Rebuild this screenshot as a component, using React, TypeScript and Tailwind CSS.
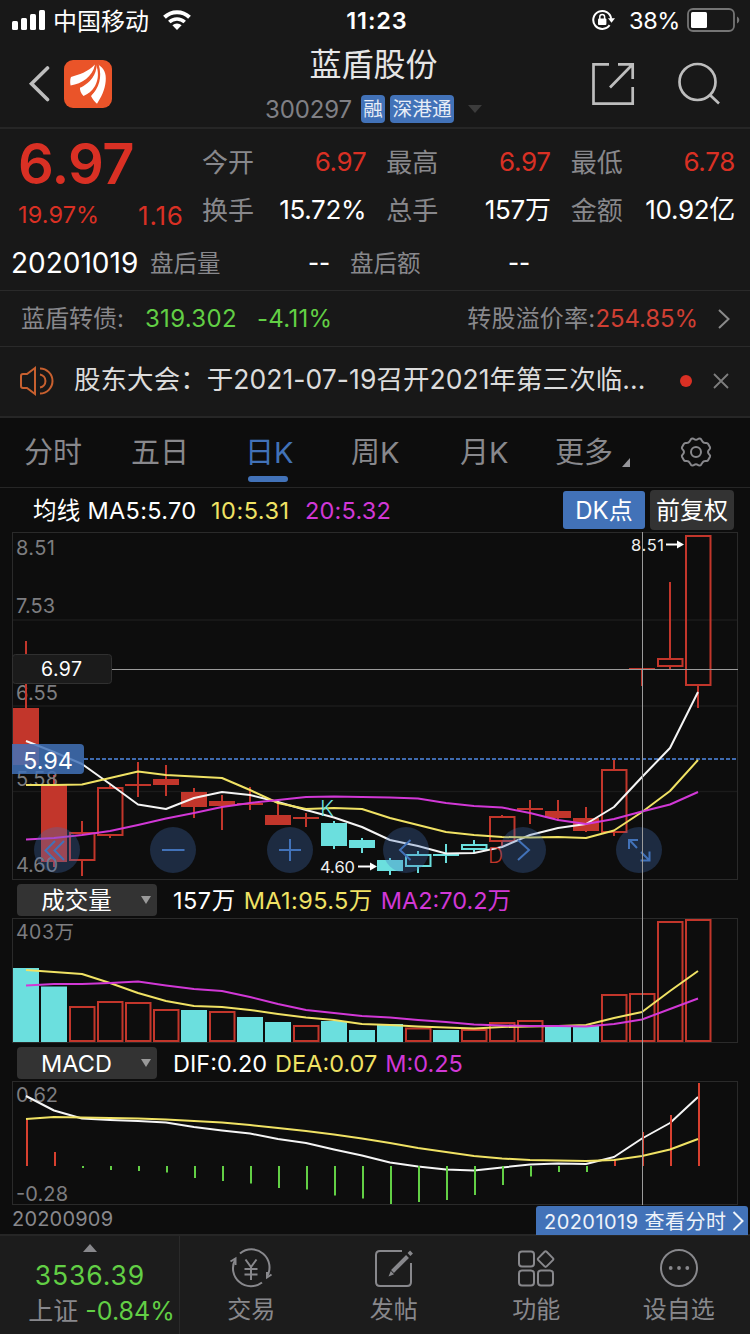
import type { ReactNode } from "react";

const FONT = "font-['Inter','Noto_Sans_CJK_SC',sans-serif]";

const RED = "#c2362b";
const CYAN = "#6bdfde";
const YELLOW = "#f0e264";
const MAGENTA = "#d138d6";
const GREEN = "#62cf45";

type Candle = {
  kind: "solid" | "hollow" | "cross";
  color: string;
  top: number;
  bottom: number;
  high: number;
  low: number;
};

const c = (
  kind: Candle["kind"],
  color: string,
  top: number,
  bottom: number,
  high: number,
  low: number
): Candle => ({ kind, color, top, bottom, high, low });

const candles: Candle[] = [
  c("solid", RED, 708, 765, 641, 765),
  c("solid", RED, 785, 862, 775, 867),
  c("hollow", RED, 832, 861, 821, 876),
  c("hollow", RED, 787, 836, 785, 838),
  c("cross", RED, 785, 785, 762, 797),
  c("solid", RED, 779, 785, 765, 796),
  c("solid", RED, 792, 807, 788, 818),
  c("solid", RED, 801, 806, 795, 830),
  c("cross", RED, 804, 804, 787, 810),
  c("solid", RED, 815, 825, 802, 825),
  c("cross", RED, 818, 818, 813, 827),
  c("solid", CYAN, 823, 846, 821, 849),
  c("solid", CYAN, 840, 848, 838, 853),
  c("solid", CYAN, 860, 871, 858, 875),
  c("hollow", CYAN, 854, 867, 851, 873),
  c("cross", CYAN, 855, 855, 844, 863),
  c("hollow", CYAN, 844, 850, 840, 853),
  c("hollow", RED, 816, 842, 815, 846),
  c("cross", RED, 809, 809, 800, 824),
  c("solid", RED, 811, 818, 800, 821),
  c("solid", RED, 818, 831, 807, 832),
  c("hollow", RED, 769, 833, 759, 836),
  c("cross", RED, 669, 669, 669, 686),
  c("hollow", RED, 658, 667, 582, 669),
  c("hollow", RED, 535, 686, 535, 708),
];

const ma5 = [741, 752, 764, 784, 804.5, 809, 798, 792, 795, 802, 810, 817.5, 827, 840, 846, 853.5, 853, 847, 835, 828, 824, 807, 777, 748, 692];
const ma10 = [785, 785, 784.5, 778, 771.5, 775, 776.5, 778, 790, 803, 809, 808, 809, 818, 825, 832, 835, 837, 837.5, 837, 838, 830.5, 812, 791, 760];
const ma20 = [839.5, 838, 835, 831, 825, 818.5, 813, 807, 803, 800, 797, 796.5, 797, 797.5, 798.5, 803, 806, 807.5, 813, 820, 824, 819, 811.5, 804.5, 792];

const volumes = [968, 986.5, 1006, 1001, 1002, 1009, 1010, 1011, 1017, 1022, 1025, 1021, 1030, 1024, 1027.5, 1030, 1029, 1022, 1020, 1026.5, 1026, 994, 993, 921, 919];
const volumeDown = [0, 1, 6, 8, 9, 11, 12, 13, 15, 19, 20];
const volMa1 = [970, 972, 974, 983, 993, 1001, 1006, 1007, 1010, 1014, 1017.5, 1020, 1024, 1025, 1026.5, 1027.5, 1028.5, 1027, 1026.5, 1026, 1025, 1018, 1012, 991, 971];
const volMa2 = [985.5, 984, 984, 983, 981.5, 985.5, 989, 991, 997, 1004, 1010, 1013, 1016, 1017.5, 1020, 1022, 1024.5, 1025.5, 1026, 1026, 1026.5, 1024, 1019.5, 1009, 998.5];

const MACD_ZERO = 1166;
const macdBars = [1119, 1152, 1168, 1170, 1171, 1172.5, 1178, 1181, 1183.5, 1188, 1189.5, 1195.5, 1198.5, 1204, 1202, 1200, 1195, 1185, 1176.5, 1172, 1172, 1160, 1132, 1115, 1083];
const dif = [1096, 1110.5, 1118.5, 1120, 1121, 1122.5, 1127, 1130.5, 1133.5, 1139, 1143, 1149.5, 1155.5, 1162.5, 1166.5, 1169.5, 1170.5, 1167.5, 1164.5, 1163.5, 1164, 1157, 1138.5, 1123, 1097];
const dea = [1119, 1117, 1117.5, 1118, 1118.5, 1119.5, 1121, 1122.5, 1125, 1128, 1131, 1134.5, 1138.5, 1143, 1148, 1152, 1156, 1158.5, 1160, 1160.5, 1161, 1160, 1156, 1149.5, 1139];

const centerX = (i: number) => 26 + i * 28;

function Line({ data, color }: { data: number[]; color: string }) {
  return (
    <polyline
      points={data.map((y, i) => `${centerX(i)},${y}`).join(" ")}
      fill="none"
      stroke={color}
      strokeWidth="2"
      strokeLinejoin="round"
    />
  );
}

function StatusBar() {
  return (
    <div className="grid h-10 grid-cols-[1fr_auto_1fr] items-center pl-3 pr-[8px] text-white">
      <div className="flex items-center">
        <svg width="34" height="20" viewBox="0 0 34 20" fill="currentColor">
          <rect x="0" y="11" width="6" height="9" rx="1.5" />
          <rect x="9" y="8" width="6" height="12" rx="1.5" />
          <rect x="18" y="4" width="6" height="16" rx="1.5" />
          <rect x="27" y="0" width="6" height="20" rx="1.5" />
        </svg>
        <span className="ml-[7px] pt-[3px] text-[24px] leading-none">中国移动</span>
        <svg className="ml-[14px]" width="28" height="20" viewBox="0 0 28 20">
          <path d="M1.500 7.200a18 18 0 0 1 25 0" fill="none" stroke="currentColor" strokeWidth="4" />
          <path d="M6.300 12a11.200 11.200 0 0 1 15.400 0" fill="none" stroke="currentColor" strokeWidth="3.600" />
          <path d="M14 20l-4.600-4.700a6.600 6.600 0 0 1 9.200 0z" fill="currentColor" />
        </svg>
      </div>
      <span className="pt-[2px] text-[23.500px] font-semibold leading-none tracking-[0.900px]">11:23</span>
      <div className="flex items-center justify-end pr-[2px]">
        <svg width="23" height="22" viewBox="0 0 23 22">
          <path d="M17.600 16.200a9 9 0 1 1 1.600-6.400" fill="none" stroke="currentColor" strokeWidth="2" />
          <path d="M16 9.200h7l-3.500 4.600z" fill="currentColor" />
          <rect x="6" y="9.600" width="8.400" height="6.400" rx="1" fill="currentColor" />
          <path d="M7.800 10V7.800a2.400 2.400 0 0 1 4.800 0V10" fill="none" stroke="currentColor" strokeWidth="1.500" />
        </svg>
        <span className="ml-[14px] pt-[2px] text-[23.500px] leading-none tracking-[-0.400px]">38%</span>
        <svg className="ml-[7px]" width="53" height="24" viewBox="0 0 53 24">
          <rect x="1" y="1" width="46" height="22" rx="5" fill="none" stroke="#757575" strokeWidth="1.800" />
          <rect x="4" y="4" width="16" height="16" rx="1.500" fill="currentColor" />
          <path d="M50 8.500c3 1.400 3 5.600 0 7z" fill="#757575" />
        </svg>
      </div>
    </div>
  );
}

function Header() {
  return (
    <div className="grid h-[89px] grid-cols-[263px_220px_1fr] border-b-2 border-[#262626]">
      <div className="flex items-center pl-[28px]">
        <svg width="22" height="36" viewBox="0 0 22 36">
          <path d="M19.500 2L3.500 17.700l16 15.800" fill="none" stroke="#bdbdbd" strokeWidth="3.600" strokeLinecap="round" />
        </svg>
        <svg className="ml-[14px]" width="48" height="48" viewBox="0 0 48 48">
          <rect width="48" height="48" rx="9" fill="#ea5429" />
          <path d="M7 17C6 19 6 23 6.600 25.500 18 23.500 28.500 17 31 4.500 24 12 15 14.500 7 17z" fill="#fff" />
          <path d="M16 27C24 23 31 15 32 4.500 34.500 11 35 19 31 26 28 31 24 34 19.500 36 17 33.500 15.500 30 16 27z" fill="#fff" />
          <path d="M34 4.600C40 8 42.500 14 41.700 21 41 30 37 37.500 33 43.700 31 42 28 38.500 27 36 34.500 27 37.500 17 34 4.600z" fill="#fff" />
          <path d="M32 4.500C31.500 15 25 22.500 16 27M34 4.600C37.300 17 34.500 27.500 26 35.500" fill="none" stroke="#ea5429" strokeWidth="1.600" />
        </svg>
      </div>
      <div className="flex flex-col items-center pl-[1px] pt-[8px]">
        <span className="text-[32px] leading-[34px] text-[#e6e6e6]">蓝盾股份</span>
        <div className="mt-[13px] flex h-7 items-center">
          <span className="pt-[1px] text-[24px] leading-none tracking-[-0.100px] text-[#808085]">300297</span>
          <span className="ml-[9px] flex h-7 w-6 items-center justify-center rounded bg-[#4272b8] pt-[2px] text-[19.500px] leading-none text-[#e8eef7]">融</span>
          <span className="ml-[5px] flex h-7 w-16 items-center justify-center rounded bg-[#4272b8] pt-[2px] text-[19.700px] leading-none text-[#e8eef7]">深港通</span>
          <svg className="ml-[14px]" width="14" height="8" viewBox="0 0 14 8">
            <path d="M0 0h14L7 8z" fill="#3c3c3c" />
          </svg>
        </div>
      </div>
      <div className="flex items-start pl-[108px] pt-[22px]">
        <svg width="44" height="44" viewBox="0 0 44 44" fill="none" stroke="#bdbdbd" strokeWidth="2.700">
          <path d="M18 2.300H2.500v39.400h39.200V25M27 2.300h14.700V17M41.200 2.800L19 25.500" />
        </svg>
        <svg className="ml-[42px]" width="44" height="44" viewBox="0 0 44 44" fill="none" stroke="#bdbdbd" strokeWidth="2.700">
          <circle cx="20.500" cy="20" r="18" />
          <path d="M32.500 32.500L42 41.500" />
        </svg>
      </div>
    </div>
  );
}

const metrics = [
  { label: "今开", value: "6.97", up: true },
  { label: "最高", value: "6.97", up: true },
  { label: "最低", value: "6.78", up: true },
  { label: "换手", value: "15.72%" },
  { label: "总手", value: "157万" },
  { label: "金额", value: "10.92亿" },
];

function Quote() {
  return (
    <div className="h-[162px] border-b border-[#2a2a2a]">
      <div className="flex h-[108px]">
        <div className="w-[202px] pl-[18px] pt-[7px] text-[#d93024]">
          <div className="text-[56px] font-[560] leading-[56px] tracking-[-0.600px]">6.97</div>
          <div className="mt-[8px] flex items-center leading-[28px]">
            <span className="w-[120px] text-[23.500px] tracking-[0.100px]">19.97%</span>
            <span className="pt-[2px] text-[26px] tracking-[0.800px]">1.16</span>
          </div>
        </div>
        <div className="grid w-[533px] grid-cols-3 grid-rows-[48px_48px] gap-x-5 pt-[9px]">
          {metrics.map((m) => (
            <div key={m.label} className="flex items-center justify-between text-[26px] leading-none">
              <span className="pt-[1px] text-[#88888c]">{m.label}</span>
              <span className={m.up ? "tracking-[-0.300px] text-[#d93024]" : "tracking-[-0.300px] text-white"}>{m.value}</span>
            </div>
          ))}
        </div>
      </div>
      <div className="flex h-[52px] items-center leading-none">
        <span className="w-[150px] pl-[11px] text-[28px] text-white">20201019</span>
        <span className="w-[158px] pt-[1px] text-[23.500px] text-[#88888c]">盘后量</span>
        <span className="w-[42px] text-[24px] font-medium text-white">--</span>
        <span className="w-[158px] pt-[1px] text-[23.500px] text-[#88888c]">盘后额</span>
        <span className="text-[24px] font-medium text-white">--</span>
      </div>
    </div>
  );
}

function BondRow() {
  return (
    <div className="flex h-[56px] items-center border-b border-[#2a2a2a] pl-[21px] pr-[20px] pt-[1px] text-[24px] leading-none">
      <span className="w-[124px] text-[#88888c]">蓝盾转债:</span>
      <span className="w-[112px] tracking-[0.300px] text-[#62cf45]">319.302</span>
      <span className="tracking-[0.300px] text-[#62cf45]">-4.11%</span>
      <span className="ml-auto tracking-[0.200px] text-[#88888c]">转股溢价率:</span>
      <span className="tracking-[-0.100px] text-[#cf3f33]">254.85%</span>
      <svg className="ml-[20px]" width="12" height="20" viewBox="0 0 12 20">
        <path d="M1 1l9.500 9L1 19" fill="none" stroke="#8a8a8a" strokeWidth="2" />
      </svg>
    </div>
  );
}

function Notice() {
  return (
    <div className="flex h-[71px] items-center border-b-2 border-[#262626] pb-[2px] pl-[19px] pr-[21px]">
      <svg width="36" height="30" viewBox="0 0 36 30" fill="none" stroke="#c8602f" strokeWidth="2">
        <path d="M16 2L8 8H4Q2 8 2 10v10q0 2 2 2h4l8 6z" />
        <path d="M21 8.500a6.600 6.600 0 0 1 0 13M21 2.500a12.500 12.500 0 0 1 0 25" />
      </svg>
      <span className="ml-[19px] w-[590px] whitespace-nowrap pb-[2px] text-[26.500px] leading-none tracking-[0.050px] text-[#dcdcdc]">
        股东大会：于2021-07-19召开2021年第三次临...
      </span>
      <span className="ml-[16px] h-3 w-3 rounded-full bg-[#d93024]" />
      <svg className="ml-auto" width="16" height="16" viewBox="0 0 16 16">
        <path d="M1 1l14 14M15 1L1 15" stroke="#7d7d7d" strokeWidth="1.800" />
      </svg>
    </div>
  );
}

function Tab({ children, active }: { children: ReactNode; active?: boolean }) {
  return (
    <div className={active ? "relative text-[#4272b8]" : "text-[#88888c]"}>
      {children}
      {active && <span className="absolute left-[3px] top-[39px] h-[6px] w-10 rounded-full bg-[#4272b8]" />}
    </div>
  );
}

function Tabs() {
  return (
    <div className="grid h-[70px] grid-cols-[107px_114px_106px_109px_95px_124px_1fr] items-center border-b border-[#262626] pl-[24px] pt-[1px] text-[29px] leading-[32px]">
      <Tab>分时</Tab>
      <Tab>五日</Tab>
      <Tab active>日K</Tab>
      <Tab>周K</Tab>
      <Tab>月K</Tab>
      <Tab>
        <span className="flex items-end">
          更多
          <svg className="mb-[2px] ml-[9px]" width="8" height="9" viewBox="0 0 8 9">
            <path d="M8 0v9H0z" fill="#96969a" />
          </svg>
        </span>
      </Tab>
      <svg className="-mt-[2px]" width="34" height="32" viewBox="0 0 34 32" fill="none" stroke="#88888c" strokeWidth="2">
        <path d="M12 3.200Q12.500 2.500 13.500 2.500 14.500 2.500 15 3q2 1.500 4 0 .5-.5 1.500-.5 1 0 1.500.700L23.500 5.500Q24.500 7.500 27.500 7q1.200 0 1.700 1l1.800 3.200q.5 1-.5 2-1.500 1.300-1.500 2.800 0 1.500 1.500 2.800 1 1 .5 2L29.200 24q-.5 1-1.700 1-3-.5-4 1.500L22 28.800q-.5.700-1.500.700-1 0-1.500-.500-2-1.500-4 0-.5.500-1.500.500-1 0-1.500-.700L10.500 26.500Q9.500 24.500 6.500 25 5.300 25 4.800 24L3 20.800q-.5-1 .5-2Q5 17.500 5 16q0-1.500-1.500-2.800-1-1-.5-2L4.800 8q.5-1 1.700-1 3 .5 4-1.500z" />
        <circle cx="17" cy="16" r="5" />
      </svg>
    </div>
  );
}

function MaRow() {
  return (
    <div className="flex h-[44px] items-center pl-[33px] pr-4 text-[23.500px] leading-none">
      <span className="w-[178px] pt-[2px] tracking-[0.300px] text-white">均线 MA5:5.70</span>
      <span className="w-[94px] pt-[2px] tracking-[0.500px] text-[#f0e264]">10:5.31</span>
      <span className="pt-[2px] tracking-[0.200px] text-[#d138d6]">20:5.32</span>
      <span className="ml-auto flex h-[38px] w-[82px] items-center justify-center rounded-[3px] bg-[#4272b8] pt-[2px] text-[24px] text-white">DK点</span>
      <span className="ml-[5px] flex h-10 w-[84px] items-center justify-center rounded bg-[#333] pt-[1px] text-[24px] text-white">前复权</span>
    </div>
  );
}

const controls = [
  { x: 57, d: "M55 841L45.500 850.500l9.500 9.500M64 841L54.500 850.500L64 860" },
  { x: 173, d: "M162 850h22.500" },
  { x: 290, d: "M279 850h22M290 839v22" },
  { x: 406, d: "M410.500 840L400 850l10.500 10" },
  { x: 523, d: "M518 840l11 10l-11 10" },
  { x: 639, d: "M637 848L629.500 840M629 849v-9h9M641 852l8 8M640.500 860.500h9v-9" },
];

function PriceChart() {
  return (
    <svg className="block" width="726" height="348" viewBox="12 532 726 348">
      <rect x="12.500" y="532.500" width="725" height="347" fill="none" stroke="#2a2a2a" />
      <path d="M13 620H737M13 706H737M13 791.500H737" stroke="#1b1b1b" strokeWidth="1.500" />
      <g fill="#7d7d80" fontSize="20">
        <text x="16" y="555" textLength="39">8.51</text>
        <text x="16" y="612.500" textLength="39">7.53</text>
        <text x="16" y="699.500" textLength="42">6.55</text>
      </g>
      {candles.map((k, i) => {
        const x = centerX(i);
        if (k.kind === "cross") {
          return <path key={i} d={`M${x - 13} ${k.top}h26M${x} ${k.high}V${k.low}`} stroke={k.color} strokeWidth="2" />;
        }
        return (
          <g key={i} stroke={k.color} strokeWidth="2">
            <path d={`M${x} ${k.high}V${k.top}M${x} ${k.bottom}V${k.low}`} />
            {k.kind === "solid" ? (
              <rect x={x - 13} y={k.top} width="26" height={k.bottom - k.top} fill={k.color} stroke="none" />
            ) : (
              <rect x={x - 12} y={k.top + 1} width="24.500" height={k.bottom - k.top - 2} fill="none" />
            )}
          </g>
        );
      })}
      <g fill="#7d7d80" fontSize="20">
        <text x="16" y="785.500" textLength="42">5.58</text>
        <text x="16" y="872" textLength="42">4.60</text>
      </g>
      <path d="M84 759H737" stroke="#3f6bb0" strokeWidth="2" strokeDasharray="4 2" />
      <Line data={ma5} color="#f5f5f5" />
      <Line data={ma10} color={YELLOW} />
      <Line data={ma20} color={MAGENTA} />
      <text x="320" y="815.500" fill={CYAN} fontSize="21.500" fontWeight="300">K</text>
      <text x="488" y="863" fill={RED} fontSize="21" fontWeight="300">D</text>
      <g fill="#f0f0f0" fontSize="16.500">
        <text x="631" y="550.500" textLength="33">8.51</text>
        <text x="320" y="873" textLength="35">4.60</text>
      </g>
      <path d="M666 544.500h13M358 866.500h14" stroke="#fff" strokeWidth="2" />
      <path d="M677 540.500l7 4-7 4zM370 862.500l7 4-7 4z" fill="#fff" />
      <path d="M112 669.500H738" stroke="#9b9b9b" />
      <rect x="12.500" y="654.500" width="99" height="29" rx="3" fill="#1b1b1b" stroke="#303030" />
      <text x="41" y="675.500" fill="#fff" fontSize="19.500" textLength="41">6.97</text>
      <path d="M12 744h68q4 0 4 4v22q0 4-4 4H12z" fill="#4272b8" fillOpacity="0.850" />
      <text x="23" y="768.500" fill="#fff" fontSize="23.500" textLength="50">5.94</text>
      {controls.map((b) => (
        <g key={b.x}>
          <circle cx={b.x} cy="850" r="23" fill="#4272b8" fillOpacity="0.300" />
          <path d={b.d} fill="none" stroke="#4272b8" strokeWidth="2" />
        </g>
      ))}
    </svg>
  );
}

function VolumeChart() {
  return (
    <svg className="block" width="726" height="125" viewBox="12 918 726 125">
      <rect x="12.500" y="918.500" width="725" height="124" fill="none" stroke="#2a2a2a" />
      <text x="16" y="939" fill="#7d7d80" fontSize="19.500" textLength="58">403万</text>
      {volumes.map((y, i) =>
        volumeDown.includes(i) ? (
          <rect key={i} x={centerX(i) - 13} y={y} width="26" height={1042 - y} fill={CYAN} />
        ) : (
          <rect key={i} x={centerX(i) - 12} y={y + 1} width="24.500" height={1040 - y} fill="none" stroke={RED} strokeWidth="2" />
        )
      )}
      <Line data={volMa1} color={YELLOW} />
      <Line data={volMa2} color={MAGENTA} />
    </svg>
  );
}

function MacdChart() {
  return (
    <svg className="block" width="726" height="124" viewBox="12 1081 726 124">
      <rect x="12.500" y="1081.500" width="725" height="123" fill="none" stroke="#2a2a2a" />
      <g fill="#7d7d80" fontSize="20">
        <text x="16" y="1102" textLength="42">0.62</text>
        <text x="16" y="1201" textLength="52">-0.28</text>
      </g>
      <Line data={dif} color="#f5f5f5" />
      {macdBars.map((y, i) => (
        <path key={i} d={`M${centerX(i) + 1} ${MACD_ZERO}V${y}`} stroke={y < MACD_ZERO ? "#d8402f" : GREEN} strokeWidth="2" />
      ))}
      <Line data={dea} color={YELLOW} />
    </svg>
  );
}

function IndicatorRow({ name, children }: { name: string; children: ReactNode }) {
  return (
    <div className="flex h-[38px] items-center pl-[5px] pt-[2px] text-[23.500px] leading-none text-white">
      <div className="mr-[16px] flex h-8 w-[140px] items-center justify-end rounded bg-[#333] pr-[6px]">
        <span className="flex-1 pr-[5px] pt-[2px] text-center">{name}</span>
        <svg width="10" height="8" viewBox="0 0 10 8">
          <path d="M0 0h10L5 8z" fill="#9a9a9a" />
        </svg>
      </div>
      {children}
    </div>
  );
}

function Charts() {
  return (
    <div className="relative px-3">
      <PriceChart />
      <IndicatorRow name="成交量">
        <span className="pt-[2px] tracking-[0.500px]">157万</span>
        <span className="ml-[8px] pt-[2px] tracking-[0.400px] text-[#f0e264]">MA1:95.5万</span>
        <span className="ml-[8px] pt-[2px] text-[#d138d6]">MA2:70.2万</span>
      </IndicatorRow>
      <VolumeChart />
      <IndicatorRow name="MACD">
        <span className="pt-[2px]">DIF:0.20</span>
        <span className="ml-[8px] pt-[2px] text-[#f0e264]">DEA:0.07</span>
        <span className="ml-[8px] pt-[2px] text-[#d138d6]">M:0.25</span>
      </IndicatorRow>
      <MacdChart />
      {/* crosshair runs through all three panels */}
      <div className="absolute bottom-0 left-[642px] top-0 w-px bg-[#9b9b9b]" />
    </div>
  );
}

function DateRow() {
  return (
    <div className="flex h-[31px] items-start justify-between border-b-2 border-[#262626] pl-[12px] pr-[2px]">
      <span className="pt-[4px] text-[20px] leading-[20px] tracking-[0.200px] text-[#88888c]">20200909</span>
      <div className="mt-[1px] flex h-[29px] w-[212px] items-center rounded-t-[3px] bg-[#4272b8] pl-[8px] text-[20px] leading-none tracking-[0.450px] text-[#eef3fa]">
        <span className="whitespace-nowrap pt-[2px]">20201019 查看分时</span>
        <svg className="ml-auto mr-[4px]" width="12" height="20" viewBox="0 0 12 20">
          <path d="M1.500 1l9 9-9 9" fill="none" stroke="#eef3fa" strokeWidth="2" />
        </svg>
      </div>
    </div>
  );
}

const actions = [
  {
    label: "交易",
    icon: (
      <>
        <path d="M11 5.500a18 18 0 0 1 27 23M33 34.500A18 18 0 0 1 6 12" />
        <path d="M1.500 13.500L6.500 10.500V17M42.500 26.500L38 29.500V24" />
        <path d="M16.500 11.500L22 19l5.500-7.500M22 19v13M15.500 21h13M15.500 26.500h13" />
      </>
    ),
  },
  {
    label: "发帖",
    icon: (
      <>
        <path d="M30 3H8Q4 3 4 7v27q0 4 4 4h27q4 0 4-4V15" />
        <path d="M35.500 8.500L20.500 23.500" strokeWidth="4" />
        <path d="M16.500 28.500l2.300-5.500 3.200 3.200z" fill="currentColor" stroke="none" />
        <path d="M37 6.500L39.500 4" strokeWidth="4" />
      </>
    ),
  },
  {
    label: "功能",
    icon: (
      <>
        <rect x="5" y="3.500" width="15" height="15" rx="3" />
        <rect x="5" y="22.500" width="15" height="15" rx="3" />
        <rect x="24" y="22.500" width="15" height="15" rx="3" />
        <path d="M30.600 3.800L24.300 10.100q-1 1 0 2L30.600 18.400q1 1 2 0L38.900 12.100q1-1 0-2L32.600 3.800q-1-1-2 0z" />
      </>
    ),
  },
  {
    label: "设自选",
    icon: (
      <>
        <circle cx="22" cy="20" r="18" />
        <g fill="currentColor" stroke="none">
          <circle cx="13.700" cy="20" r="1.900" />
          <circle cx="22" cy="20" r="1.900" />
          <circle cx="30.300" cy="20" r="1.900" />
        </g>
      </>
    ),
  },
];

function BottomBar() {
  return (
    <div className="flex h-[98px] bg-[#1c1c1c]">
      <div className="flex w-[180px] flex-col items-center border-r border-[#2a2a2a] pt-[8px]">
        <svg width="14" height="8" viewBox="0 0 14 8">
          <path d="M7 0l7 8H0z" fill="#88888c" />
        </svg>
        <span className="mt-[9px] pl-[1px] text-[26.500px] leading-[28px] tracking-[0.900px] text-[#62cf45]">3536.39</span>
        <span className="mt-[8px] whitespace-nowrap pl-[24px] text-[25px] leading-[28px] text-[#88888c]">
          上证 <span className="text-[#62cf45]">-0.84%</span>
        </span>
      </div>
      <div className="grid flex-1 grid-cols-4">
        {actions.map((a) => (
          <div key={a.label} className="flex flex-col items-center pt-[12px] text-[#88888c]">
            <svg width="44" height="42" viewBox="0 0 44 42" fill="none" stroke="currentColor" strokeWidth="2">
              {a.icon}
            </svg>
            <span className="mt-[7px] text-[24px] leading-[26px]">{a.label}</span>
          </div>
        ))}
      </div>
    </div>
  );
}

export default function App() {
  return (
    <div className={`h-[1334px] w-[750px] overflow-hidden bg-[#0d0d0d] font-[380] ${FONT}`}>
      <div className="bg-[#181818]">
        <StatusBar />
        <Header />
        <Quote />
        <BondRow />
        <Notice />
      </div>
      <Tabs />
      <MaRow />
      <Charts />
      <DateRow />
      <BottomBar />
    </div>
  );
}
